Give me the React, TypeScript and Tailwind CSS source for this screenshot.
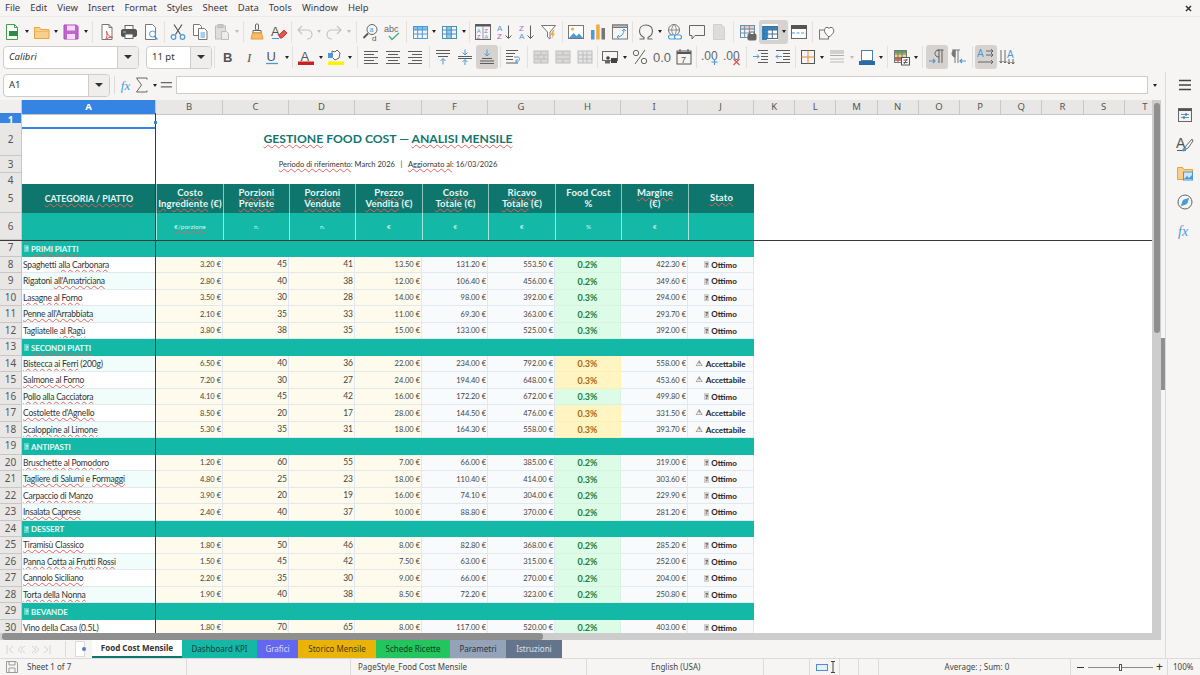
import type { ReactNode } from 'react';

const ui = "font-['Noto_Sans',sans-serif]";
const sheet = "font-['Lato',sans-serif]";
const cols = 'grid grid-cols-[22px_134px_67px_66px_66px_67px_66px_67px_66px_67px_66px_repeat(10,41.2px)]';

const G = '#5c5c5c';
const B = '#4a9bd6';
const L = '#c4c4c4';

function S({ children, size = 18 }: { children: ReactNode; size?: number }) {
  return (
    <svg width={size} height={size} viewBox="0 0 18 18" fill="none" stroke={G} strokeWidth="1">
      {children}
    </svg>
  );
}

// horizontal line stacks used by the alignment and indent icons
function Lines({ rows }: { rows: [number, number, number, string?][] }) {
  return (
    <>
      {rows.map(([a, b, y, c], i) => (
        <path key={i} d={`M${a} ${y}H${b}`} stroke={c ?? G} />
      ))}
    </>
  );
}

function Grid({ x = 2, y = 3, w = 14, h = 12, color = B }: { x?: number; y?: number; w?: number; h?: number; color?: string }) {
  const cw = w / 3;
  const ch = h / 3;
  return (
    <g stroke={color}>
      <rect x={x + 0.5} y={y + 0.5} width={w} height={h} />
      <path d={`M${x + cw} ${y}v${h}M${x + cw * 2} ${y}v${h}M${x} ${y + ch}h${w}M${x} ${y + ch * 2}h${w}`} />
    </g>
  );
}

const icons: Record<string, ReactNode> = {
  new: <S><path d="M3.5 1.5h8l3 3v12h-11z" stroke="#43a047" fill="#fff" /><rect x="6" y="8" width="9" height="5" fill="#2e8b46" stroke="none" /><path d="M11.5 1.5v3h3" stroke="#43a047" /></S>,
  open: <S><path d="M1.5 4.5h5l1.5 2h8v9h-14.500z" fill="#f9cf8e" stroke="#eda33c" /><path d="M1.500 8.500h15" stroke="#f2b765" /></S>,
  save: <S><path d="M2 2h12.500l1.500 1.500v12.500h-14z" fill="#c264cf" stroke="#a94bb6" /><rect x="5" y="2.500" width="8" height="5" fill="#f4dcf7" stroke="none" /><rect x="5" y="11" width="8" height="5" fill="#f4dcf7" stroke="none" /></S>,
  pdf: <S><path d="M4 1.500h7l3 3v12h-10z" stroke="#777" fill="#fff" /><path d="M11 1.500v3h3" stroke="#777" /><path d="M8.500 8c1 4 2 5 6 6.500-3-.5-5 0-7 2.500 1.500-3 2-5 1-9z" stroke="#d9534f" fill="none" /></S>,
  print: <S><rect x="5" y="2.500" width="8" height="4" fill="#fff" stroke="#666" /><rect x="1.500" y="6.500" width="15" height="7" rx="1.500" fill="#555" stroke="#555" /><rect x="5" y="11" width="8" height="4.500" fill="#fff" stroke="#666" /><path d="M3 9h3" stroke="#8fc1e6" /></S>,
  preview: <S><path d="M3.500 1.500h7l3 3v12h-10z" stroke="#777" fill="#fff" /><circle cx="10.500" cy="11" r="3" stroke={B} /><path d="M12.500 13.500l3 3" stroke={B} strokeWidth="1.500" /></S>,
  cut: <S><path d="M5 1.500l6.500 10M13 1.500l-6.500 10" stroke="#555" strokeWidth="1.200" /><circle cx="4.500" cy="14" r="2.300" stroke={B} strokeWidth="1.200" /><circle cx="13.500" cy="14" r="2.300" stroke={B} strokeWidth="1.200" /></S>,
  copy: <S><path d="M2.500 1.500h6l2 2v9h-8z" stroke="#777" fill="#fff" /><path d="M7.500 5.500h6l2.500 2.500v8.500h-8.500z" stroke="#777" fill="#fff" /><path d="M9.500 10h4.500M9.500 12h4.500M9.500 14h4.500" stroke={B} /></S>,
  paste: <S><rect x="2.500" y="3" width="10" height="13" fill="#dedede" stroke="#bdbdbd" /><rect x="5" y="1.500" width="5" height="3" fill="#c9c9c9" stroke="#bbb" /><path d="M8.500 8.500h5l2 2v6h-7z" fill="#ececec" stroke="#bdbdbd" /></S>,
  clone: <S><rect x="7.500" y="1" width="3" height="6" rx="1" stroke="#666" /><path d="M5 7.500h8v2.500H5z" fill="#fff" stroke="#666" /><path d="M4.500 10h9l1.500 6H3z" fill="#f7bb6b" stroke="#e99a30" /></S>,
  clear: <S><text x="1" y="13" fontSize="13" fontFamily="Liberation Sans" fill="#555" stroke="none">A</text><path d="M2 15.500h7" stroke={B} /><path d="M9 12l5-5 3 3-5 5h-2z" fill="#e2574c" stroke="#d43d33" /></S>,
  undo: <S><path d="M6 3L2 7l4 4M2 7h9c3 0 5 2 5 4.500S14 16 11 16" stroke={L} strokeWidth="1.200" /></S>,
  redo: <S><path d="M12 3l4 4-4 4M16 7H7C4 7 2 9 2 11.500S4 16 7 16" stroke={L} strokeWidth="1.200" /></S>,
  find: <S><circle cx="10" cy="6.500" r="5" stroke="#666" /><text x="7.500" y="9" fontSize="7" fontFamily="Liberation Sans" fill={B} stroke="none">a</text><path d="M6 10.500L1.500 15" stroke="#555" strokeWidth="1.800" /><text x="10" y="17.500" fontSize="8" fontFamily="Liberation Sans" fill="#555" stroke="none">d</text></S>,
  spell: <S><text x="0" y="9" fontSize="9" fontFamily="Liberation Sans" fill="#666" stroke="none">abc</text><path d="M5 13l3 3.500L15 10" stroke="#4caf7d" strokeWidth="1.400" /></S>,
  table: <S><rect x="2" y="3" width="14" height="4" fill="#7cc0ec" stroke="none" /><Grid /></S>,
  cols: <S><rect x="7" y="3" width="4.500" height="12" fill="#8cc7ed" stroke="none" /><Grid color="#4f8fbd" /></S>,
  sort: <S><rect x="1.500" y="1.500" width="15" height="15" stroke="#666" /><path d="M1.500 2.500h15" stroke="#555" strokeWidth="2" /><path d="M9 3v13" stroke="#999" /><text x="2.800" y="9.500" fontSize="6" fontFamily="Liberation Sans" fill={B} stroke="none">A</text><text x="2.800" y="15.500" fontSize="6" fontFamily="Liberation Sans" fill="#b25fc4" stroke="none">Z</text><text x="10.300" y="9.500" fontSize="6" fontFamily="Liberation Sans" fill="#b25fc4" stroke="none">Z</text><text x="10.300" y="15.500" fontSize="6" fontFamily="Liberation Sans" fill={B} stroke="none">A</text></S>,
  asc: <S><text x="1" y="8" fontSize="8" fontFamily="Liberation Sans" fill={B} stroke="none">A</text><text x="1" y="16" fontSize="8" fontFamily="Liberation Sans" fill="#b25fc4" stroke="none">Z</text><path d="M12.500 2.500v12.500M9.500 12.500l3 3 3-3" /></S>,
  desc: <S><text x="1" y="8" fontSize="8" fontFamily="Liberation Sans" fill="#b25fc4" stroke="none">Z</text><text x="1" y="16" fontSize="8" fontFamily="Liberation Sans" fill={B} stroke="none">A</text><path d="M12.500 2.500v12.500M9.500 12.500l3 3 3-3" /></S>,
  filter: <S><path d="M1.500 2.500h14L10 9v7l-2.500-2V9z" stroke="#777" fill="#fff" /><path d="M13 7l-2.500 5h2l-1 4 3.500-5.500h-2l1.500-3.500z" fill="#f3a93c" stroke="none" /></S>,
  image: <S><rect x="1.500" y="2.500" width="15" height="13" stroke="#777" fill="#fff" /><path d="M2 15l4.500-5 3 3 2.500-2.500 4 4.500z" fill={B} stroke="none" /><circle cx="5.500" cy="6" r="1.500" fill="#f3a93c" stroke="none" /></S>,
  chart: <S><rect x="2" y="7" width="3.500" height="9.500" fill={B} stroke="none" /><rect x="7.200" y="1.500" width="3.500" height="15" fill="#f3a93c" stroke="none" /><rect x="12.500" y="5" width="3.500" height="11.500" fill="#777" stroke="none" /></S>,
  pivot: <S><rect x="1.500" y="2" width="15" height="14" stroke="#777" /><rect x="1.500" y="2" width="15" height="2.500" fill="#bbb" stroke="#777" /><path d="M6 14c4 0 7-3 7-7.500M11 8l2-2 2 2M8 12l-2 2 2 2" stroke={B} /></S>,
  omega: <S><path d="M2.500 16h4.500v-1.500C4 13 2.500 11 2.500 8 2.500 4.500 5 2 9 2s6.500 2.500 6.500 6c0 3-1.500 5-4.500 6.500V16h4.500" stroke="#666" strokeWidth="1.100" /></S>,
  link: <S><circle cx="8" cy="7" r="5.500" stroke="#777" /><path d="M2.500 7h11M8 1.500c-3 3-3 8 0 11M8 1.500c3 3 3 8 0 11" stroke="#777" strokeWidth=".8" /><rect x="2.500" y="12" width="7" height="4" rx="2" stroke={B} fill="#fff" strokeWidth="1.200" /><rect x="8.500" y="12" width="7" height="4" rx="2" stroke={B} fill="#fff" strokeWidth="1.200" /></S>,
  comment: <S><path d="M1.500 2.500h15v10H7l-3 3.500v-3.500H1.500z" stroke="#666" /></S>,
  note: <S><path d="M3.500 1.500h8l3 3v12h-11z" fill="#dcdcdc" stroke="#d0d0d0" /></S>,
  headers: <S><rect x="2" y="3" width="14" height="4" fill="#ef9a9a" stroke="none" opacity=".5" /><Grid x={1} y={2} color="#6b90ad" /><rect x="9" y="11" width="8" height="6" rx="1" fill="#666" stroke="#666" /><rect x="11" y="9" width="4" height="2.500" fill="#fff" stroke="#666" /></S>,
  rowcols: <S><rect x="1" y="1" width="16" height="16" fill="#fff" stroke="none" /><rect x="1" y="4" width="5" height="13" fill="#2f86c9" stroke="none" /><rect x="1" y="3" width="16" height="4" fill="#2f86c9" stroke="none" /><Grid x={2} y={3} color="#4a6f8c" /></S>,
  freeze: <S><rect x="1.500" y="2.500" width="15" height="13" stroke="#666" fill="#fff" /><rect x="1.500" y="2.500" width="15" height="3" fill="#555" stroke="#555" /><path d="M2 10h14" stroke={B} strokeDasharray="3 1.500" /></S>,
  shapes: <S><rect x="1.500" y="7" width="9" height="9" stroke="#777" /><path d="M11 14C6 10 6 7 7 5.500c1-1.500 3-1.500 4 0 1-1.500 3-1.500 4 0 1.500 2 1 5-4 8.500z" stroke="#666" fill="#fff" /></S>,

  bold: <S><text x="4" y="14" fontSize="13" fontWeight="700" fontFamily="Liberation Sans" fill="#555" stroke="none">B</text></S>,
  italic: <S><text x="6" y="14" fontSize="13" fontStyle="italic" fontFamily="Liberation Serif" fill="#555" stroke="none">I</text></S>,
  underline: <S><text x="3.500" y="12.500" fontSize="13" fontFamily="Liberation Sans" fill="#555" stroke="none">U</text><path d="M3 15.500h12" stroke={B} strokeWidth="1.300" /></S>,
  fontcolor: <S><text x="3.500" y="12.500" fontSize="13" fontFamily="Liberation Sans" fill="#555" stroke="none">A</text><rect x="1" y="13.500" width="16" height="3.500" fill="#c9211e" stroke="none" /></S>,
  highlight: <S><path d="M5 9V3l3 1 2-2 3 3-1 5-4 2z" fill="#fff" stroke="#666" /><path d="M1 5h5v5H1z" fill={B} stroke="none" /><rect x="1" y="13.500" width="16" height="3.500" fill="#fff200" stroke="none" /></S>,
  left: <S><Lines rows={[[2, 16, 3.500], [2, 12, 6.500], [2, 16, 9.500], [2, 12, 12.500], [2, 16, 15.500]]} /></S>,
  center: <S><Lines rows={[[2, 16, 3.500], [4, 14, 6.500], [2, 16, 9.500], [4, 14, 12.500], [2, 16, 15.500]]} /></S>,
  right: <S><Lines rows={[[2, 16, 3.500], [6, 16, 6.500], [2, 16, 9.500], [6, 16, 12.500], [2, 16, 15.500]]} /></S>,
  top: <S><Lines rows={[[2, 16, 2.500], [2, 16, 5.500], [4, 14, 8.500]]} /><path d="M9 16.500v-6M6.500 13L9 10.500 11.500 13" stroke={B} /></S>,
  middle: <S><Lines rows={[[2, 16, 8.500], [2, 16, 10.500]]} /><path d="M9 1.500v5M6.500 4.500L9 7l2.500-2.500M9 17v-5M6.500 14L9 11.500 11.500 14" stroke={B} /></S>,
  bottom: <S><Lines rows={[[4, 14, 10.500], [2, 16, 13], [2, 16, 15.500]]} /><path d="M9 1.500v6.500M6.500 5.500L9 8l2.500-2.500" stroke={B} /></S>,
  wrap: <S><Lines rows={[[2, 14, 2.500], [2, 11, 5.500], [2, 9, 8.500], [2, 9, 11.500], [2, 14, 15]]} /><path d="M10 9h4c2 0 2 4 0 4h-2M13.500 11l-2 2 2 2" stroke={B} /></S>,
  merge: <S><rect x="2" y="3" width="14" height="12" fill="#d9d9d9" stroke="#bdbdbd" /><path d="M2 7h14M2 11h14M9 3v4M6 7v4M12 7v4M9 11v4" stroke="#bdbdbd" /></S>,
  merge2: <S><rect x="2" y="3" width="14" height="12" fill="#d9d9d9" stroke="#bdbdbd" /><path d="M2 7h14M2 11h14M9 3v4M9 11v4" stroke="#bdbdbd" /></S>,
  unmerge: <S><rect x="2" y="3" width="14" height="12" fill="#e4e4e4" stroke="#bdbdbd" /><path d="M2 7h14M2 11h14M7 3v12M11 3v12" stroke="#bdbdbd" /></S>,
  currency: <S size={18}><rect x="1.500" y="3.500" width="15" height="9" stroke="#666" /><circle cx="7" cy="10" r="1.800" fill="#444" stroke="none" /><rect x="10" y="10" width="6" height="5" fill="#444" stroke="none" /><rect x="4" y="12" width="5" height="3.500" fill="#666" stroke="none" /></S>,
  percent: <S><circle cx="5" cy="5" r="2.700" stroke="#666" /><circle cx="13" cy="13" r="2.700" stroke="#666" /><path d="M14 2L4 16" stroke="#666" /></S>,
  number: <S><text x="0" y="14" fontSize="13" fontFamily="Liberation Sans" fill="#666" stroke="none">0.0</text></S>,
  date: <S><rect x="2" y="3" width="14" height="13" stroke="#555" /><path d="M2 5h14" stroke="#555" strokeWidth="2" /><path d="M5 1v3M13 1v3" stroke="#555" /><text x="6" y="14.500" fontSize="9" fontFamily="Liberation Sans" fill="#555" stroke="none">7</text></S>,
  adddec: <S><text x="0" y="12" fontSize="12" fontFamily="Liberation Sans" fill="#666" stroke="none">.00</text><path d="M13.500 11v6M10.500 14h6" stroke={B} strokeWidth="1.200" /></S>,
  deldec: <S><text x="0" y="12" fontSize="12" fontFamily="Liberation Sans" fill="#666" stroke="none">.00</text><path d="M10.500 11l6 6M16.500 11l-6 6" stroke="#d9534f" strokeWidth="1.200" /></S>,
  indent: <S><Lines rows={[[6, 16, 2.500], [9, 16, 5.500], [9, 16, 8.500], [9, 16, 11.500], [6, 16, 14.500]]} /><path d="M1 8.500h6M5 6.500l2 2-2 2" stroke={B} /></S>,
  outdent: <S><Lines rows={[[2, 16, 2.500], [9, 16, 5.500], [9, 16, 8.500], [9, 16, 11.500], [2, 16, 14.500]]} /><path d="M8 8.500H2M4 6.500l-2 2 2 2" stroke={B} /></S>,
  borders: <S><rect x="2.500" y="2.500" width="13" height="13" stroke="#555" /><path d="M9 2.500v13M2.500 9h13" stroke="#e08a2e" /></S>,
  borderstyle: <S><Lines rows={[[2, 16, 3, '#aaa'], [2, 16, 5, '#aaa'], [2, 16, 7.500, '#aaa'], [2, 16, 11, '#bbb'], [2, 16, 14, '#bbb']]} /></S>,
  bordercolor: <S><rect x="3.500" y="2.500" width="11" height="10" stroke="#4a7fa8" fill="#fff" /><rect x="1" y="13" width="16" height="4" fill="#2a6aa5" stroke="none" /></S>,
  cond: <S><rect x="1" y="2" width="12" height="3.500" fill="#4fae61" stroke="none" /><rect x="1" y="5.500" width="12" height="3.500" fill="#f2dc6b" stroke="none" /><rect x="1" y="9" width="7" height="4" fill="#ea6a5e" stroke="none" /><Grid x={1} y={2} w={12} h={12} color="#777" /><rect x="8.500" y="9.500" width="8" height="7.500" fill="#fff" stroke="#555" /><path d="M10.500 12h4M10.500 14.500h4M14 11l-3 5" /></S>,
  ltrp: <S><path d="M9.500 2h6M11 2v13M14 2v13" /><path d="M11 2C8 2 7 4 7 5.500S8 9 11 9" /><path d="M1 13h6M5 11l2 2-2 2" stroke={B} strokeWidth="1.200" /></S>,
  rtlp: <S><path d="M2 2h8M5 2v13M8 2v13" stroke="#777" /><path d="M5 2C3 2 2 4 2 5.500S3 9 5 9z" fill="#777" stroke="#777" /><path d="M16 13h-6M12 11l-2 2 2 2" stroke={B} strokeWidth="1.200" /></S>,
  ltr: <S><text x="0" y="9" fontSize="10" fontFamily="Liberation Sans" fill={B} stroke="none">A</text><path d="M9 3h7M14 1l2 2-2 2M9 7h7M14 5l2 2-2 2M1 14h15M14 12l2 2-2 2" strokeWidth=".9" /></S>,
  vert: <S><text x="8" y="10" fontSize="10" fontFamily="Liberation Sans" fill={B} stroke="none">A</text><path d="M2 2v13M.5 13L2 15l1.500-2M6 2v13M4.500 13L6 15l1.500-2M10 11v5M8.500 14l1.500 2 1.500-2M14 11v5M12.500 14l1.500 2 1.500-2" strokeWidth=".9" /></S>,

  fx: <S><text x="2" y="14" fontSize="14" fontStyle="italic" fontFamily="Liberation Serif" fill={B} stroke="none">fx</text></S>,
  sum: <S><path d="M14 3.500V2H3.500l5 7-5 7H14v-1.500" stroke="#666" /></S>,
  equals: <S><path d="M3 6.500h12M3 11h12" stroke="#666" strokeWidth="1.500" /></S>,

  sideMenu: <S><path d="M3 4.500h12M3 9h12M3 13.500h12" stroke="#444" strokeWidth="1.500" /></S>,
  sideProps: <S><rect x="2.500" y="2.500" width="13" height="13" stroke="#666" /><path d="M2.500 4h13" stroke="#555" strokeWidth="2" /><path d="M5 8.500h8M5 11.500h8" stroke={B} /><path d="M10 7v3M8 10v3" stroke="#555" /></S>,
  sideStyles: <S><text x="0" y="13" fontSize="14" fontFamily="Liberation Sans" fill="#555" stroke="none">A</text><path d="M1 15.500h9" /><path d="M16 4l-6 7-2 4 4-2 5-7z" fill="#fff" stroke="#666" /><path d="M6 16c0-2 1-3 2-3s3 1 2 2-2 2-4 1z" fill={B} stroke="none" /></S>,
  sideGallery: <S><path d="M1.500 3.500h5l1.500 2h8.500v10h-15z" fill="#f9cf8e" stroke="#eda33c" /><rect x="7.500" y="8" width="9" height="8" fill="#cfe4f5" stroke={B} /><path d="M8 15l3-3 2 2 3-3v4z" fill={B} stroke="none" /></S>,
  sideNav: <S><circle cx="9" cy="9" r="7" stroke="#666" /><path d="M12.500 5.500l-1.800 5.200-5.200 1.800 1.800-5.200z" fill={B} stroke={B} /></S>,
};

type Item = { i?: string; dd?: 'dark' | 'light'; sep?: number; on?: boolean };

function Tool({ i, on }: { i: string; on?: boolean }) {
  return (
    <div className={`flex h-[24px] w-[22px] shrink-0 items-center justify-center rounded-[3px] ${on ? 'bg-[#d5d2cf]' : ''}`}>
      {icons[i]}
    </div>
  );
}

function Caret({ light }: { light?: boolean }) {
  return (
    <div className="flex h-[24px] w-[7.5px] shrink-0 items-center justify-center">
      <div className={`h-0 w-0 border-x-[2.5px] border-t-[3px] border-x-transparent ${light ? 'border-t-[#bbbbbb]' : 'border-t-[#222222]'}`} />
    </div>
  );
}

function Sep({ w }: { w: number }) {
  return (
    <div className="flex h-[22px] shrink-0 justify-center" style={{ width: w }}>
      <div className="h-full w-px bg-[#e3e1df]" />
    </div>
  );
}

function Row({ items }: { items: Item[] }) {
  return (
    <>
      {items.map((it, n) => {
        if (it.sep) return <Sep key={n} w={it.sep} />;
        if (it.dd) return <Caret key={n} light={it.dd === 'light'} />;
        return <Tool key={n} i={it.i!} on={it.on} />;
      })}
    </>
  );
}

const t = (i: string, on?: boolean): Item => ({ i, on });
const dd: Item = { dd: 'dark' };
const ld: Item = { dd: 'light' };
const sp = (sep: number): Item => ({ sep });

const bar1: Item[] = [
  t('new'), dd, t('open'), dd, t('save'), dd, sp(6.5), t('pdf'), t('print'), t('preview'), sp(5), t('cut'), t('copy'), t('paste'), ld, sp(5),
  t('clone'), t('clear'), sp(4), t('undo'), ld, t('redo'), ld, sp(7), t('find'), t('spell'), sp(5), t('table'), dd, t('cols'), dd, sp(4),
  t('sort'), t('asc'), t('desc'), t('filter'), sp(5), t('image'), t('chart'), t('pivot'), sp(4), t('omega'), dd, t('link'), t('comment'), t('note'), sp(6.5),
  t('headers'),
];
const bar1end: Item[] = [t('freeze'), sp(5.5), t('shapes')];

const bar2: Item[] = [
  sp(5), t('bold'), t('italic'), t('underline'), dd, sp(4.5), t('fontcolor'), dd, t('highlight'), dd, sp(6), t('left'), t('center'), t('right'), sp(6),
  t('top'), t('middle'), t('bottom', true), sp(4), t('wrap'), sp(6), t('merge'), t('merge2'), t('unmerge'), sp(3), t('currency'), dd, t('percent'), t('number'), t('date'), sp(4),
  t('adddec'), t('deldec'), sp(7), t('indent'), t('outdent'), sp(3), t('borders'), dd, t('borderstyle'), ld, t('bordercolor'), dd, sp(5.5), t('cond'), dd, sp(5.5),
  t('ltrp', true), t('rtlp'), sp(5), t('ltr', true), t('vert'),
];

function Combo({ value, width, italic, valueWidth }: { value: string; width: number; italic?: boolean; valueWidth: number }) {
  return (
    <div className="flex h-[23px] shrink-0 overflow-hidden rounded-[4px] border border-[#d0cdc9] bg-white" style={{ width }}>
      <div className={`flex items-center pl-[5px] text-[9.5px] text-[#333333] ${italic ? 'italic' : ''}`} style={{ width: valueWidth }}>{value}</div>
      <div className="flex flex-1 items-center justify-center border-l border-[#d0cdc9] bg-[#f0eeec]">
        <div className="h-0 w-0 border-x-[4px] border-t-[4px] border-x-transparent border-t-[#333333]" />
      </div>
    </div>
  );
}

// {words} get the spell checker's red wave
function Sp({ text }: { text: string }) {
  return (
    <span className="whitespace-pre">
      {text.split(/(\{[^}]*\})/).map((p, i) =>
        p.startsWith('{') ? (
          <span key={i} className="underline decoration-[#e8605a] decoration-wavy decoration-[0.6px] underline-offset-[0.5px]">{p.slice(1, -1)}</span>
        ) : (
          <span key={i}>{p}</span>
        ),
      )}
    </span>
  );
}

const headers: [string, string?][] = [
  ['{Costo}', '{Ingrediente} (€)'],
  ['{Porzioni}', '{Previste}'],
  ['{Porzioni}', '{Vendute}'],
  ['{Prezzo}', '{Vendita} (€)'],
  ['{Costo}', '{Totale} (€)'],
  ['{Ricavo}', '{Totale} (€)'],
  ['Food Cost', '%'],
  ['{Margine}', '(€)'],
  ['{Stato}'],
];
const units = ['{€/porzione}', 'n.', 'n.', '€', '€', '€', '%', '€', ''];

type Dish = [string, string, number, number, string, string, string, string, string, boolean?];
type SheetRow = { cat: string } | { dish: Dish };
const c = (cat: string): SheetRow => ({ cat });
const d = (...dish: Dish): SheetRow => ({ dish });

const rows: SheetRow[] = [
  c('{PRIMI PIATTI}'),
  d('Spaghetti {alla Carbonara}', '3.20', 45, 41, '13.50', '131.20', '553.50', '0.2%', '422.30'),
  d("Rigatoni {all'Amatriciana}", '2.80', 40, 38, '12.00', '106.40', '456.00', '0.2%', '349.60'),
  d('{Lasagne al Forno}', '3.50', 30, 28, '14.00', '98.00', '392.00', '0.3%', '294.00'),
  d("{Penne all'Arrabbiata}", '2.10', 35, 33, '11.00', '69.30', '363.00', '0.2%', '293.70'),
  d('Tagliatelle {al Ragù}', '3.80', 38, 35, '15.00', '133.00', '525.00', '0.3%', '392.00'),
  c('{SECONDI PIATTI}'),
  d('{Bistecca ai Ferri} (200g)', '6.50', 40, 36, '22.00', '234.00', '792.00', '0.3%', '558.00', true),
  d('{Salmone al Forno}', '7.20', 30, 27, '24.00', '194.40', '648.00', '0.3%', '453.60', true),
  d('{Pollo alla Cacciatora}', '4.10', 45, 42, '16.00', '172.20', '672.00', '0.3%', '499.80'),
  d("{Costolette d'Agnello}", '8.50', 20, 17, '28.00', '144.50', '476.00', '0.3%', '331.50', true),
  d('{Scaloppine al Limone}', '5.30', 35, 31, '18.00', '164.30', '558.00', '0.3%', '393.70', true),
  c('ANTIPASTI'),
  d('{Bruschette al Pomodoro}', '1.20', 60, 55, '7.00', '66.00', '385.00', '0.2%', '319.00'),
  d('{Tagliere di Salumi} e {Formaggi}', '4.80', 25, 23, '18.00', '110.40', '414.00', '0.3%', '303.60'),
  d('{Carpaccio di Manzo}', '3.90', 20, 19, '16.00', '74.10', '304.00', '0.2%', '229.90'),
  d('{Insalata Caprese}', '2.40', 40, 37, '10.00', '88.80', '370.00', '0.2%', '281.20'),
  c('DESSERT'),
  d('{Tiramisù Classico}', '1.80', 50, 46, '8.00', '82.80', '368.00', '0.2%', '285.20'),
  d('{Panna Cotta ai Frutti Rossi}', '1.50', 45, 42, '7.50', '63.00', '315.00', '0.2%', '252.00'),
  d('{Cannolo Siciliano}', '2.20', 35, 30, '9.00', '66.00', '270.00', '0.2%', '204.00'),
  d('{Torta della Nonna}', '1.90', 40, 38, '8.50', '72.20', '323.00', '0.2%', '250.80'),
  c('{BEVANDE}'),
  d('Vino {della Casa} (0.5L)', '1.80', 70, 65, '8.00', '117.00', '520.00', '0.2%', '403.00'),
];

function RowHead({ n, on }: { n: number; on?: boolean }) {
  return (
    <div className={`flex items-center justify-center border-r border-b border-[#c9c7c5] text-[10px] ${ui} ${on ? 'bg-[#3584e4] font-bold text-white' : 'bg-[#e8e7e5] text-[#555555]'}`}>
      {n}
    </div>
  );
}

function QBox({ light }: { light?: boolean }) {
  return (
    <span className={`mr-[2px] inline-flex h-[7px] w-[5px] items-center justify-center text-[6px] leading-none font-bold ${light ? 'bg-[#5fd3c4] text-white' : 'bg-[#d0d0d0] text-[#222222]'}`}>?</span>
  );
}

const num = 'flex items-center justify-end border-r border-b border-[#e2e8f0] pt-[1px] pr-[1px] text-[#444444]';

function DishRow({ n, dish, alt }: { n: number; dish: Dish; alt: boolean }) {
  const [name, cost, planned, sold, price, total, revenue, pct, margin, warn] = dish;
  return (
    <div className={`${cols} h-[16.5px]`}>
      <RowHead n={n} />
      <div className={`flex items-center overflow-hidden border-b border-[#e2e8f0] pt-[2px] pl-[1px] text-[8.5px] tracking-[-0.2px] whitespace-nowrap text-[#333333] ${alt ? 'bg-[#f0fdfa]' : 'bg-white'}`}>
        <Sp text={name} />
      </div>
      <div className={`${num} bg-[#fefbec] text-[7.5px]`}>{cost} €</div>
      <div className={`${num} bg-[#fefbec] text-[8.5px]`}>{planned}</div>
      <div className={`${num} bg-[#fefbec] text-[8.5px]`}>{sold}</div>
      <div className={`${num} bg-[#fefbec] text-[7.5px]`}>{price} €</div>
      <div className={`${num} bg-[#f8fafc] text-[7.5px]`}>{total} €</div>
      <div className={`${num} bg-[#f8fafc] text-[7.5px]`}>{revenue} €</div>
      <div className={`flex items-center justify-center border-r border-b pt-[1px] text-[9px] font-bold ${warn ? 'border-[#fdf0b5] bg-[#fef5c3] text-[#a9690f]' : 'border-[#d6f5e0] bg-[#dcfce7] text-[#15803d]'}`}>{pct}</div>
      <div className={`${num} bg-[#f8fafc] text-[7.5px]`}>{margin} €</div>
      <div className="flex items-center justify-center border-r border-b border-[#e2e8f0] bg-[#f8fafc] pt-[1px] text-[8px] font-bold whitespace-nowrap text-[#222222]">
        {warn ? <><span className="mr-[3px] font-['DejaVu_Sans'] font-normal">⚠</span>Accettabile</> : <><QBox />Ottimo</>}
      </div>
    </div>
  );
}

function Sheet() {
  let rowNo = 7;
  let dishCount = 0;
  return (
    <div className={`relative h-[533px] w-[1152px] shrink-0 overflow-hidden bg-white ${sheet}`}>
      <div className={`${cols} h-[13px] text-[9.5px] ${ui}`}>
        <div className="border-r border-b border-[#c9c7c5] bg-[#f0efed]" />
        {'ABCDEFGHIJKLMNOPQRST'.split('').map((l) => (
          <div key={l} className={`flex items-center justify-center border-r border-b border-[#c9c7c5] ${l === 'A' ? 'bg-[#3584e4] font-bold text-white' : 'bg-[#e8e7e5] text-[#555555]'}`}>{l}</div>
        ))}
      </div>

      <div className={`${cols} h-[10px]`}>
        <RowHead n={1} on />
        <div className="border-b-2 border-[#3584e4]" />
      </div>
      <div className={`${cols} h-[33px]`}>
        <RowHead n={2} />
        <div className="col-span-10 flex items-center justify-center pb-[1px] text-[12.2px] font-bold text-[#0f766e]">
          <Sp text="{GESTIONE} FOOD COST — {ANALISI MENSILE}" />
        </div>
      </div>
      <div className={`${cols} h-[17px]`}>
        <RowHead n={3} />
        <div className="col-span-10 flex items-center justify-center text-[7.5px] text-[#333333]">
          <Sp text="{Periodo di riferimento}: March 2026   |   {Aggiornato al}: 16/03/2026" />
        </div>
      </div>
      <div className={`${cols} h-[11px]`}>
        <RowHead n={4} />
      </div>

      <div className={`${cols} h-[29px]`}>
        <RowHead n={5} />
        <div className="flex items-center justify-center bg-[#0f766e] text-[8.8px] font-bold text-[#e8f6f3]">
          <Sp text="{CATEGORIA / PIATTO}" />
        </div>
        {headers.map(([a, b], i) => (
          <div key={i} className="flex flex-col items-center justify-center border-l border-[#8fc4bd] bg-[#0f766e] text-[9.5px] leading-[10.5px] font-bold tracking-[0.15px] whitespace-nowrap text-[#e8f6f3]">
            <div><Sp text={a} /></div>
            {b && <div><Sp text={b} /></div>}
          </div>
        ))}
      </div>
      <div className={`${cols} h-[27px]`}>
        <RowHead n={6} />
        <div className="bg-[#14b8a6]" />
        {units.map((u, i) => (
          <div key={i} className="flex items-center justify-center border-l border-[#a5e6dc] bg-[#14b8a6] text-[6.5px] text-[#d6f5ef]">
            <Sp text={u} />
          </div>
        ))}
      </div>

      {rows.map((r, i) => {
        rowNo += i === 0 ? 0 : 1;
        if ('cat' in r) {
          return (
            <div key={i} className={`${cols} h-[16.5px]`}>
              <RowHead n={rowNo} />
              <div className="col-span-10 flex items-center bg-[#14b8a6] pt-[1px] pl-[2px] text-[8px] font-bold tracking-[-0.1px] text-[#e8f9f6]">
                <QBox light />
                <Sp text={r.cat} />
              </div>
            </div>
          );
        }
        const alt = dishCount % 2 === 1;
        dishCount += 1;
        return <DishRow key={i} n={rowNo} dish={r.dish} alt={alt} />;
      })}

      {/* frozen panes and cell cursor sit over the cells */}
      <div className="absolute top-[13px] bottom-0 left-[155px] w-px bg-[#3a3a3a]" />
      <div className="absolute top-[140px] right-0 left-0 h-px bg-[#3a3a3a]" />
      <div className="absolute top-[21px] left-[154px] h-[3px] w-[3px] bg-[#3584e4]" />
    </div>
  );
}

const tabs: [string, string][] = [
  ['Dashboard KPI', 'w-[75px] bg-[#14b8a6] text-[#123f3a]'],
  ['Grafici', 'w-[41px] bg-[#6366f1] text-[#d9dcff]'],
  ['Storico Mensile', 'w-[78px] bg-[#eab308] text-[#4a3a05]'],
  ['Schede Ricette', 'w-[74px] bg-[#22c55e] text-[#0e3f20]'],
  ['Parametri', 'w-[56px] bg-[#94a3b8] text-[#28323f]'],
  ['Istruzioni', 'w-[56px] bg-[#64748b] text-[#dde3ea]'],
];

function Nav({ d }: { d: string }) {
  return (
    <svg width="11" height="11" viewBox="0 0 11 11" fill="none" stroke="#d6d4d2">
      <path d={d} />
    </svg>
  );
}

function Cell({ w, children, className = '' }: { w: string; children?: ReactNode; className?: string }) {
  return <div className={`flex h-full shrink-0 items-center border-r border-[#dddbd9] ${w} ${className}`}>{children}</div>;
}

export default function App() {
  return (
    <div className={`flex h-[675px] w-[1200px] flex-col overflow-hidden bg-[#f6f5f4] ${ui}`}>
      <div className="relative flex h-[17px] shrink-0 items-center gap-[10px] border-b border-[#eceae8] px-[5px] text-[9.5px] text-[#3d3846]">
        {['File', 'Edit', 'View', 'Insert', 'Format', 'Styles', 'Sheet', 'Data', 'Tools', 'Window', 'Help'].map((m) => (
          <span key={m}>{m}</span>
        ))}
        <svg className="absolute top-[5px] right-[8px]" width="7" height="7" viewBox="0 0 7 7" stroke="#333" strokeWidth="1.500">
          <path d="M1 1l5 5M6 1L1 6" />
        </svg>
      </div>

      <div className="flex h-[29px] shrink-0 items-center pl-[1px]">
        <Row items={bar1} />
        <div className="flex rounded-[3px] bg-[#d5d2cf]">
          <Tool i="rowcols" />
          <Caret />
        </div>
        <Row items={bar1end} />
      </div>

      <div className="flex h-[26px] shrink-0 items-center pb-[4px] pl-[3px]">
        <Combo value="Calibri" width={136} italic valueWidth={113} />
        <div className="w-[7px] shrink-0" />
        <Combo value="11 pt" width={66} valueWidth={43} />
        <Row items={bar2} />
      </div>

      <div className="flex min-h-0 flex-1">
        <div className="flex w-[1165px] shrink-0 flex-col">
          <div className="flex h-[28px] shrink-0 items-center pb-[2px] pl-[3px]">
            <Combo value="A1" width={107} valueWidth={84} />
            <div className="ml-[4px] h-[18px] w-px bg-[#dddbd9]" />
            <div className="ml-[4px] flex w-[56px] shrink-0 items-center">
              {icons.fx}
              <div className="-ml-[3px]">{icons.sum}</div>
              <Caret />
              {icons.equals}
            </div>
            <div className="ml-[1px] h-[18px] w-[972px] shrink-0 border border-[#d0cdc9] bg-white" />
            <div className="ml-[3px]"><Caret /></div>
          </div>

          <div className="flex h-[540px] shrink-0">
            <div className="flex w-[1152px] shrink-0 flex-col">
              <Sheet />
              <div className="h-[7px] bg-[#cdcdcd] pl-[2px]">
                <div className="h-full w-[541px] rounded-[3px] bg-[#8f8f8f]" />
              </div>
            </div>
            <div className="h-full w-[9px] shrink-0 bg-[#cdcdcd] px-[1.5px] pt-[3px]">
              <div className="h-[230px] rounded-[3px] bg-[#8f8f8f]" />
            </div>
            <div className="flex w-[4px] shrink-0 items-start pt-[238px]">
              <div className="h-[52px] w-[4px] bg-[#8f8f8f]" />
            </div>
          </div>

          <div className="flex h-[18px] shrink-0 items-center text-[8px]">
            <div className="flex w-[65px] shrink-0 items-center gap-[1px] pl-[5px]">
              <Nav d="M2 1v9M8 2L4 5.500 8 9" />
              <Nav d="M8 2L4 5.500 8 9M5 2L1 5.500 5 9" />
              <Nav d="M3 2l4 3.500L3 9M6 2l4 3.500L6 9" />
              <Nav d="M9 1v9M3 2l4 3.500L3 9" />
            </div>
            <div className="h-[16px] w-px bg-[#dddbd9]" />
            <div className="ml-[9px] flex h-[16px] w-[10px] shrink-0 border border-[#dddbd9] bg-white" />
            <div className="-ml-[3px] h-[4px] w-[4px] rounded-full bg-[#4a7fbd]" />
            <div className="ml-[6px] flex h-full w-[90px] shrink-0 items-center justify-center border-b-2 border-[#0f766e] bg-white font-bold text-[#333333]">
              Food Cost Mensile
            </div>
            {tabs.map(([name, cls]) => (
              <div key={name} className={`flex h-full shrink-0 items-center justify-center ${cls}`}>{name}</div>
            ))}
          </div>
        </div>

        <div className="flex flex-1 flex-col items-center border-l border-[#dddbd9] pl-[3px]">
          <div className="mt-[4px] flex h-[18px] items-center">{icons.sideMenu}</div>
          <div className="mt-[12px] flex flex-col gap-[11px]">
            {icons.sideProps}
            {icons.sideStyles}
            {icons.sideGallery}
            {icons.sideNav}
            {icons.fx}
          </div>
        </div>
      </div>

      <div className="flex h-[17px] shrink-0 items-center border-t border-[#dddbd9] text-[8px] text-[#444444]">
        <Cell w="w-[187px]" className="pl-[6px]">
          <svg width="12" height="12" viewBox="0 0 12 12" fill="none" stroke="#9a9a9a"><path d="M.5.5h9.500l1.500 1.500v9.500H.5z" /><path d="M3 .5v3.500h6V.5M3 11.500V7h6v4.500" /></svg>
          <span className="ml-[9px]">Sheet 1 of 7</span>
        </Cell>
        <Cell w="w-[164px]" />
        <Cell w="w-[236px]" className="pl-[7px]">PageStyle_Food Cost Mensile</Cell>
        <Cell w="w-[177px]" className="pl-[64px]">English (USA)</Cell>
        <Cell w="w-[46px]" />
        <Cell w="w-[30px]" className="pl-[6px]">
          <div className="h-[7px] w-[12px] border border-[#4a8fd0] bg-[#e4eff9]" />
          <svg className="ml-[2px]" width="6" height="12" viewBox="0 0 6 12" fill="none" stroke="#444"><path d="M1 .5h4M3 .5v11M1 11.500h4" /></svg>
        </Cell>
        <Cell w="w-[19px]" />
        <Cell w="w-[20px]" />
        <Cell w="w-[192px]" className="justify-center pl-[5px]">Average: ; Sum: 0</Cell>
        <div className="flex h-full w-[97px] shrink-0 items-center border-r border-[#dddbd9] pl-[6px]">
          <div className="h-px w-[7px] bg-[#333333]" />
          <div className="relative ml-[4px] h-px w-[65px] bg-[#8a8a8a]">
            <div className="absolute -top-[3px] left-[31px] h-[7px] w-[3px] border border-[#555555] bg-white" />
          </div>
          <div className="ml-[3px] text-[12px] leading-none text-[#333333]">+</div>
        </div>
        <div className="pl-[5px]">100%</div>
      </div>
    </div>
  );
}
